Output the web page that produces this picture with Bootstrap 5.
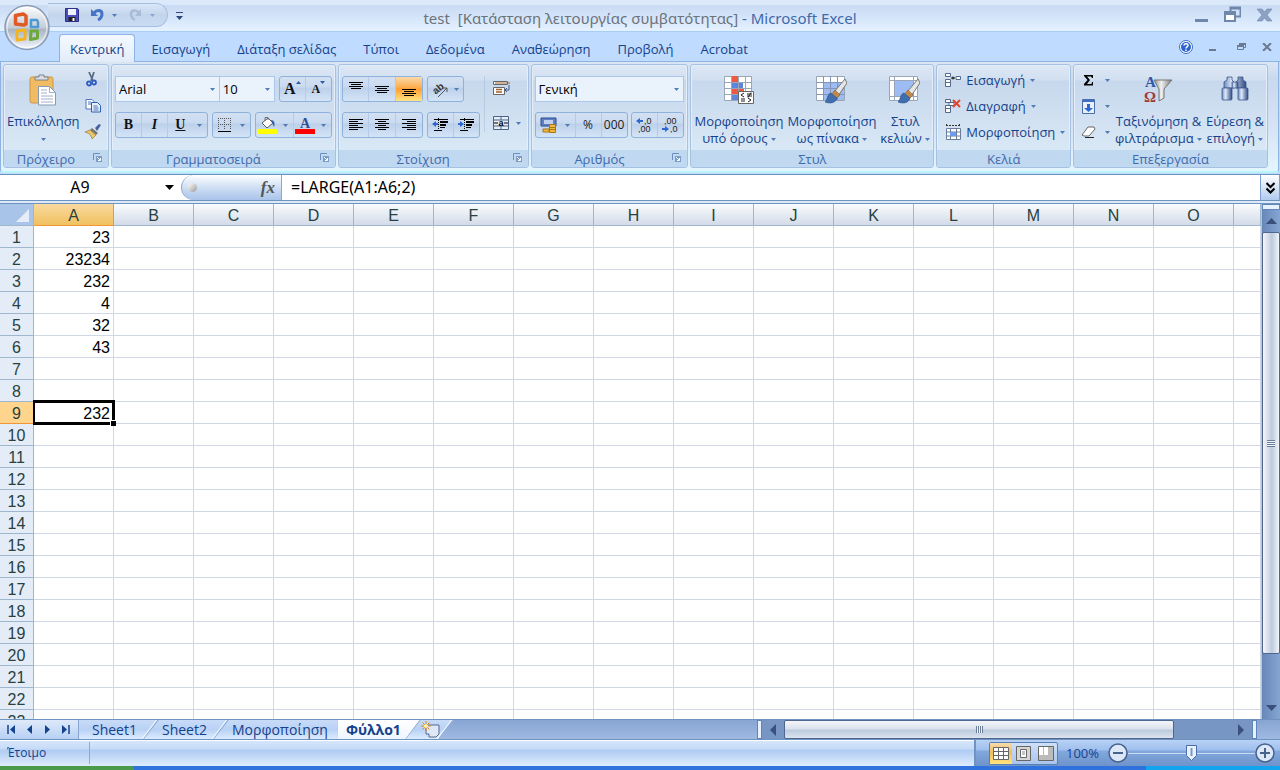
<!DOCTYPE html>
<html lang="el">
<head>
<meta charset="utf-8">
<meta name="viewport" content="width=device-width, initial-scale=1">
<title>test - Microsoft Excel</title>
<link rel="stylesheet" href="https://cdn.jsdelivr.net/npm/bootstrap@5.3.0/dist/css/bootstrap.min.css">
<style>
:root{--ink:#15428b;--ui:"Open Sans","Noto Sans",sans-serif;--calc:"Liberation Sans",Arial,sans-serif}
body{font:13px/16px var(--ui);color:var(--ink);background:#bfdbff;overflow:hidden}
button,select,input{font:inherit;color:inherit;border:0;background:none;padding:0;border-radius:0}
svg{display:block;flex:none}
a{color:inherit;text-decoration:none}
.titlebar{height:32px;background:linear-gradient(#dbe9fb 0 5px,#c9dbf3 5px,#d5e5fa 18px,#e4f1ff 30px);border-bottom:1px solid #a9cdf5}
.side{flex:1 1 0}
.wtitle{font-family:"Noto Sans",sans-serif;font-size:15px;line-height:20px;color:#6c737b}
.wtitle span{color:#3e6aaa}
.qat{height:24px;margin:3px 0 0 48px;padding:0 11px 0 17px;width:120px;border:1px solid #a5bfe2;border-left:0;border-radius:0 13px 13px 0;background:linear-gradient(#dae7f8,#c3d5ec 50%,#c9dcf4)}
.orb{position:absolute;left:4px;top:4px;z-index:3}
.tabs{height:30px;padding-left:59px;gap:5px;border-bottom:1px solid #8db2e3}
.tabs a{height:28px;line-height:29px;font-size:13px;padding:0 10px;border:1px solid transparent;border-bottom:0;margin-bottom:-1px}
.tabs a.on{background:linear-gradient(#f4f9ff,#e2ecf9);border-color:#8db2e3;border-radius:4px 4px 0 0}
.ribbon{height:111px;padding:2px 10px 3px 2px;gap:2px;background:linear-gradient(#dbe6f4 0,#c9d9ee 17px,#d4e2f4 60px,#e3f5ff 108px);border:1px solid #8db2e3;border-top:0;border-bottom:2px solid #b9f3fb;margin-right:1px;border-radius:0 0 4px 4px}
.grp{border:1px solid #a6c2e2;border-radius:3px;box-shadow:inset 0 0 0 1px #e3eefa;background:linear-gradient(#dee8f5 0,#d1dff0 15px,#c7d8ed 16px,#d9e8f5 85px);overflow:hidden}
.gbody{height:85px;padding:11px 3px 0}
.gbody.tight{padding-top:2px}
.glabel{height:20px;line-height:19px;font-size:13px;color:#3e6aaa;background:#c1d8f1;text-align:center;padding-right:20px;position:relative}
.glabel.plain{padding-right:0}
.glabel svg{position:absolute;right:6px;top:3px}
.w1{width:106px}.w2{width:225px}.w3{width:191px}.w4{width:158px}.w5{width:244px}.w6{width:135px}.w7{width:195px}
.big{display:flex;flex-direction:column;align-items:center;align-self:flex-start;line-height:17px;white-space:nowrap;margin-top:-2px}
.tight .big{margin-top:7px}
.big svg.pic{margin-bottom:7px}
.set{display:flex;height:26px;border:1px solid #8fb2dc;border-radius:3px;background:linear-gradient(#d3e0f2 0,#c9daf0 10px,#bcd0ea 11px,#d6e6f8 25px)}
.set button{display:flex;align-items:center;justify-content:center;flex:1 1 0;border-left:1px solid #b3cae8;gap:5px}
.set button:first-child{border-left:0}
.set .hot{background:linear-gradient(#fcd9a8,#fdac4c 45%,#fe9f33 50%,#ffe584)}
.set .sp{border-left:0;flex:0 0 14px}
.ser{font:bold 14px/16px "Liberation Serif",serif;color:#111}
.second{margin-top:10px}
.combo{position:relative;height:26px;border:1px solid #abc7ea;background:#eaf2fb;color:#000}
.combo select{appearance:none;display:block;width:100%;height:24px;padding-left:3px;line-height:22px}
.combo svg{position:absolute;right:4px;top:11px;pointer-events:none}
.numf{font-size:12px;color:#222}
.rowbtn{display:flex;align-items:center;gap:5px;height:26px}
.fbar{height:27px;border:1px solid #6f93bf;border-width:1px 0;background:#fff;margin-top:1px}
.fbar input{color:#000;height:24px;outline:0;font:16px/24px "Noto Sans",sans-serif}
.namebox{width:181px;position:relative}
.namebox input{width:160px;text-align:center}
.namebox svg{position:absolute;right:7px;top:10px}
.fx{width:101px;padding:0 6px;border:1px solid #8ba9d0;border-width:0 1px;border-radius:13px 0 0 13px;background:linear-gradient(#fff,#cfdff4 50%,#a9c3ea)}
.knob{width:9px;height:9px;border-radius:50%;background:linear-gradient(135deg,#fff,#9a9a9a)}
.fxl{font:italic bold 17px/20px "Liberation Serif",serif;color:#555}
.fbar .formula{flex:1;padding-left:9px}
.chev{width:20px;border:1px solid #7c9fce;border-width:0 1px;background:linear-gradient(#fff,#b1caef)}
.strip{height:3px;background:#dce9f8;border-bottom:1px solid #6f93bf}
.sheet{flex:1 1 0;min-height:0}
.cells{flex:1;min-width:0;overflow:hidden;background:#fff}
.calc{table-layout:fixed;width:100%;border-collapse:separate;border-spacing:0;font:16px/19px var(--calc);color:#000}
.calc th,.calc td{height:22px;padding:2px 0 0;border-right:1px solid #d0d7e5;border-bottom:1px solid #d0d7e5;font-weight:400;overflow:hidden}
.calc td{text-align:right;padding-right:3px}
.calc th{text-align:center;color:#27413e}
.calc thead th{background:linear-gradient(#f9fcfd,#d3dbe9);border-color:#9eb6ce}
.calc tbody th{background:#e4ecf7;border-color:#9eb6ce}
.calc thead th.on{background:linear-gradient(#f9d99f,#f1c15f);border-color:#f29536}
.calc tbody th.on{background:#ffd58d;border-color:#f29536}
.calc thead th.corner{background:#a9c4e9}
.calc .c0{width:34px}.calc .c1{width:80px}
.calc td.cur{position:relative;overflow:visible}
.cur i{position:absolute;inset:-2px -2px -2px -1px;border:solid #000;border-width:3px 3px 3px 2px}
.cur i::after{content:"";position:absolute;right:-4px;bottom:-4px;width:6px;height:6px;background:#000;border:solid #fff;border-width:1px 0 0 1px}
.vbar{width:19px;background:linear-gradient(90deg,#6787b9,#86a5d2);border-left:1px solid #a9c6ee}
.split{background:#e8f2ff;border:1px solid #5f86b8}
.vthumb{flex:0 0 82%;border:1px solid #4f678f;border-radius:2px;background:linear-gradient(90deg,#f4f6fa,#c9d3e2 45%,#bccadd 55%,#f0f5fb)}
.grip{width:8px;height:7px;background:repeating-linear-gradient(#6c7d98 0 1px,#eef3fa 1px 2px)}
.grip.h{width:7px;background:repeating-linear-gradient(90deg,#6c7d98 0 1px,#eef3fa 1px 2px)}
.tabbar{height:21px;background:linear-gradient(#87a5d3,#9fb9e1);border:1px solid #6f93bf;border-width:1px 0;font-size:14px}
.navs{width:79px;background:linear-gradient(#dfeafa,#b6d0f4);border-right:1px solid #8aa6cf;padding:0 7px}
.st{height:19px;line-height:19px;background:linear-gradient(#c8dcf8,#b8d1f5 50%,#dcebff);padding:0 22px 0 18px;margin-left:-15px;position:relative;clip-path:polygon(15px 0,100% 0,calc(100% - 15px) 100%,0 100%)}
.st svg.edge{position:absolute;right:0;top:0}
.st.first{clip-path:polygon(0 0,100% 0,calc(100% - 15px) 100%,0 100%);margin-left:0;padding-left:13px}
.st.last{padding-right:10px;clip-path:polygon(15px 0,100% 0,100% 100%,0 100%)}
.st.act{background:linear-gradient(#fff,#eef5ff);font-weight:700;margin-left:0;padding:0 20px 0 8px;clip-path:polygon(0 0,100% 0,calc(100% - 15px) 100%,0 100%)}
.st.new{padding:0 14px 0 15px}
.hbar{width:500px;background:#7796c3}
.hend{width:23px}
.hthumb{flex:0 0 390px;border:1px solid #4f678f;border-radius:2px;background:linear-gradient(#f4f6fa,#dbe2ec 45%,#bccadd 55%,#dce5f0)}
.status{height:26px;font-size:13px;background:linear-gradient(#fff 0 1px,#d6e5fb 1px,#c6dbf8 9px,#aecbf3 10px,#dceafd 25px)}
.ready{width:90px;padding-left:7px;height:22px;line-height:22px;border-right:1px solid #8ba9d6;font-size:12px}
.zoomarea{width:306px;border-left:2px solid #6f93bf;padding-left:13px;background:linear-gradient(#b9d2f5 0,#9fbfee 10px,#84a8de 11px,#7ba0d6 17px,#6e93cb)}
.views{flex:none;height:23px;width:69px;border:1px solid #587fb4;border-radius:2px;background:linear-gradient(#cfe0f8,#a9c4ec)}
.views button{flex:1;display:flex;align-items:center;justify-content:center}
.views .hot{background:linear-gradient(#f5dcae,#f0bd5a 45%,#ffe37e)}
.pct{flex:none;width:50px;text-align:right;padding-right:9px}
.zr{appearance:none;flex:none;width:127px;height:20px;background:linear-gradient(#c9dcf6,#c9dcf6) center/100% 1px no-repeat}
.zr::-webkit-slider-thumb{appearance:none;width:11px;height:16px;background:url("data:image/svg+xml,%3Csvg xmlns='http://www.w3.org/2000/svg' width='11' height='16'%3E%3Cpath d='M.5.5h10v10l-5 5-5-5z' fill='%23e9f1fb' stroke='%234a6da7'/%3E%3Cpath d='M5.500 3v8' stroke='%237b97c4' stroke-width='2'/%3E%3C/svg%3E")}
.task{height:4px;background:#2f71dd}
.task .start{width:134px;background:#4b9a4b;border-radius:0 3px 0 0}
.task .tray{width:134px;background:#12a5ee}
</style>
</head>
<body class="d-flex flex-column vh-100">
<svg width="0" height="0" class="position-absolute"><defs>
<symbol id="dn" viewBox="0 0 5 3"><path d="M0 0h5L2.500 3z" fill="#4f7cb8"/></symbol>
<symbol id="launch" viewBox="0 0 9 9"><path d="M.5 7V.5H7" fill="none" stroke="#6a8fc0"/><path d="M3 3h6v6H3z" fill="#7d9dc8"/><path d="M4 4l3 3M7.500 5v2.500H5" stroke="#fff" fill="none"/></symbol>
<symbol id="brush" viewBox="0 0 22 26"><path d="M20 1L9 14l4 4L22 5z" fill="#e6e6e6" stroke="#777"/><path d="M10 12l5 5-4 4-5-4z" fill="#c08a4b" stroke="#8a5a25" stroke-width=".6"/><path d="M6 15c-4 1-3 6-6 9 5 2 11 1 12-4z" fill="#3f6fae" stroke="#2b4f86" stroke-width=".6"/></symbol>
<symbol id="edge" viewBox="0 0 17 19"><path d="M16.500 0L2 19" stroke="#8aa6cf" stroke-width="1.500"/><path d="M14.500 0L0 19" stroke="#fff"/></symbol>
<linearGradient id="gsil" x2="0" y2="1"><stop stop-color="#fff"/><stop offset=".5" stop-color="#c6ccd6"/><stop offset=".55" stop-color="#a9b4c4"/><stop offset="1" stop-color="#f4f9ff"/></linearGradient>
<linearGradient id="gbin"><stop stop-color="#6f8cc4"/><stop offset=".35" stop-color="#dfe8f7"/><stop offset="1" stop-color="#2f4a84"/></linearGradient>
<linearGradient id="gfun"><stop stop-color="#8a8a8a"/><stop offset=".4" stop-color="#f2f2f2"/><stop offset="1" stop-color="#777"/></linearGradient>
</defs></svg>

<header class="titlebar d-flex align-items-start position-relative">
  <button class="orb" aria-label="Office"><svg width="46" height="47" viewBox="0 0 46 47"><circle cx="23" cy="23.500" r="22" fill="url(#gsil)" stroke="#8a9bb5" stroke-width="1.500"/><circle cx="23" cy="23.500" r="20" fill="none" stroke="#fff" stroke-opacity=".8"/><g fill="none" stroke-linejoin="round"><path d="M11.500 11.500l8-1.500 2.500 2v8l-2 1-8.500-1z" stroke="#e05a26" stroke-width="3.500"/><path d="M27 16h6l1 2v5l-7 0z" stroke="#4a9bd4" stroke-width="2.500"/><path d="M13 27l8-1v9l-8 1z" stroke="#f3b51f" stroke-width="3"/><path d="M27 27h6.500v7l-7 1.500z" stroke="#6aa93a" stroke-width="3"/></g></svg></button>
  <div class="side d-flex">
    <div class="qat d-flex align-items-center">
      <button aria-label="Αποθήκευση"><svg width="14" height="14" viewBox="0 0 14 14"><path d="M.5.5h12l1 1v12H.5z" fill="#4b4fb8" stroke="#2c2f86"/><path d="M3 1h8v6H3z" fill="#eef2fb"/><path d="M3.500 9h7v4h-7z" fill="#222"/><path d="M7.500 10h2v3h-2z" fill="#fff"/></svg></button>
      <button class="ms-2 ps-1" aria-label="Αναίρεση"><svg width="13" height="14" viewBox="0 0 13 14"><path d="M3 5c3-4 8-3 8 1 0 3-2 5-4 6" fill="none" stroke="#4673c4" stroke-width="3"/><path d="M0 1v7h7z" fill="#4673c4"/></svg></button>
      <svg class="ms-2" width="5" height="3"><use href="#dn"/></svg>
      <button class="ms-2 ps-1" aria-label="Ακύρωση αναίρεσης"><svg width="13" height="14" viewBox="0 0 13 14"><path d="M10 5C7 1 2 2 2 6c0 3 2 5 4 6" fill="none" stroke="#a9bbd6" stroke-width="2.500"/><path d="M12 1v7H6z" fill="#a9bbd6"/></svg></button>
      <svg class="ms-2" width="5" height="3" opacity=".5"><use href="#dn"/></svg>
    </div>
    <svg class="ms-2 mt-2 pt-1" width="7" height="12"><path d="M0 .5h7" stroke="#2d4a7a"/><path d="M0 4h7L3.500 8z" fill="#2d4a7a"/></svg>
  </div>
  <div class="wtitle pt-2 ps-2 text-nowrap">test&nbsp; [Κατάσταση λειτουργίας συμβατότητας] <span>- Microsoft Excel</span></div>
  <div class="side d-flex justify-content-end pe-2 pt-1">
    <button class="me-3" aria-label="Ελαχιστοποίηση"><svg width="13" height="20"><path d="M0 15h13v3H0z" fill="#6f87ab"/></svg></button>
    <button class="me-3" aria-label="Επαναφορά"><svg width="17" height="20"><path d="M6.500 9V3.500h10v9H12M6 4.500h11" fill="none" stroke="#6f87ab" stroke-width="2"/><path d="M1 8h10v9H1z" fill="#fff" stroke="#6f87ab" stroke-width="2"/><path d="M0 7h12v4H0z" fill="#6f87ab"/></svg></button>
    <button aria-label="Κλείσιμο"><svg width="15" height="20"><path d="M0 5h5l2.500 3L10 5h5l-5 6 5 6h-5l-2.500-3L5 17H0l5-6z" fill="#8da2c2" stroke="#6f87ab" stroke-width=".6"/></svg></button>
  </div>
</header>

<nav class="tabs d-flex align-items-end">
  <a class="on" href="#">Κεντρική</a><a href="#">Εισαγωγή</a><a href="#">Διάταξη σελίδας</a><a href="#">Τύποι</a><a href="#">Δεδομένα</a><a href="#">Αναθεώρηση</a><a href="#">Προβολή</a><a href="#">Acrobat</a>
  <div class="ms-auto d-flex align-items-center align-self-center pe-2">
    <button class="me-3" aria-label="Βοήθεια"><svg width="14" height="14" viewBox="0 0 14 14"><circle cx="7" cy="7" r="6.500" fill="#fff" stroke="#3f6ac0"/><circle cx="7" cy="7" r="5" fill="#2c62cf"/><path d="M5 5.500c0-2.500 4-2.500 4 0C9 7 7 6.800 7 8.500M7 9.500V11" stroke="#fff" stroke-width="1.500" fill="none"/></svg></button>
    <button class="me-3 pe-1" aria-label="Ελαχιστοποίηση παραθύρου"><svg width="8" height="10"><path d="M0 7h7v2H0z" fill="#6b7a90"/></svg></button>
    <button class="me-3" aria-label="Επαναφορά παραθύρου"><svg width="9" height="8"><path d="M2.500 2V.5h6v4H7M.5 3h6v3.500h-6z" fill="none" stroke="#6b7a90"/><path d="M0 2h7v2H0zM2 0h7v2H2z" fill="#6b7a90"/></svg></button>
    <button aria-label="Κλείσιμο παραθύρου"><svg width="10" height="8"><path d="M1 0l8 8M9 0L1 8" stroke="#6b7a90" stroke-width="2"/></svg></button>
  </div>
</nav>

<main class="ribbon d-flex">
  <section class="grp w1"><div class="gbody d-flex">
    <button class="big"><svg class="pic" width="28" height="32" viewBox="0 0 28 32"><rect x="1" y="3" width="23" height="26" rx="2" fill="#f0bb62" stroke="#c99748"/><path d="M6 6V3h4V1h5v2h4v3z" fill="#d9dde3" stroke="#6b7280" stroke-width=".8"/><path d="M9.500 12.500h11l6 6V31h-17z" fill="#fff" stroke="#8a97b0"/><path d="M20.500 12.500v6h6M12 16h6M12 19h6M12 22h12M12 25h12M12 28h12" fill="none" stroke="#9fb0cc"/></svg>Επικόλληση<svg class="mt-2" width="5" height="3"><use href="#dn"/></svg></button>
    <div class="d-flex flex-column ms-auto pe-1" style="gap:11px;margin-top:-4px">
      <button aria-label="Αποκοπή"><svg width="16" height="15" viewBox="0 0 16 15"><path d="M4 0l4 9M9 0L6 9" stroke="#5b6b86" stroke-width="1.800"/><circle cx="4" cy="11.500" r="2" fill="none" stroke="#2f5fc0" stroke-width="1.800"/><circle cx="9" cy="10.500" r="2" fill="none" stroke="#2f5fc0" stroke-width="1.800"/></svg></button>
      <button aria-label="Αντιγραφή"><svg width="16" height="15" viewBox="0 0 16 15"><path d="M1 1.500h6l2 2V11H1z" fill="#fff" stroke="#4d76b8"/><path d="M6.500 4.500h6l3 3v6.500h-9z" fill="#e4eefc" stroke="#2f5fb0"/><path d="M3 4h3M3 6h3M8.500 8h4M8.500 10h5M8.500 12h5" stroke="#4d76b8"/></svg></button>
      <button aria-label="Πινέλο μορφοποίησης"><svg width="16" height="15" viewBox="0 0 16 15"><path d="M10 4l4-4 2 1-4 6z" fill="#4a5fa0"/><path d="M7 4l6 5-2 2-6-5z" fill="#777"/><path d="M5 6l6 5-4 4C6 10 3 9 0 8z" fill="#ecc76a" stroke="#9a7b32" stroke-width=".7"/></svg></button>
    </div>
  </div><div class="glabel">Πρόχειρο<svg width="9" height="9"><use href="#launch"/></svg></div></section>

  <section class="grp w2"><div class="gbody">
    <div class="d-flex">
      <label class="combo" style="width:105px"><select aria-label="Γραμματοσειρά"><option>Arial</option></select><svg width="5" height="3"><use href="#dn"/></svg></label>
      <label class="combo border-start-0" style="width:55px"><select aria-label="Μέγεθος"><option>10</option></select><svg width="5" height="3"><use href="#dn"/></svg></label>
      <div class="set ms-1" style="width:53px"><button class="ser" style="gap:0;font-size:16px">A<svg class="align-self-start mt-1" width="5" height="3"><path d="M0 3h5L2.500 0z" fill="#2d5aa8"/></svg></button><button class="ser" style="gap:0;font-size:12px">A<svg class="align-self-start mt-1" width="5" height="3"><path d="M0 0h5L2.500 3z" fill="#2d5aa8"/></svg></button></div>
    </div>
    <div class="d-flex gap-1 second">
      <div class="set" style="width:93px"><button class="ser">B</button><button class="ser fst-italic">I</button><button class="ser text-decoration-underline">U</button><button class="sp" aria-label="Υπογράμμιση"><svg width="5" height="3"><use href="#dn"/></svg></button></div>
      <div class="set" style="width:39px"><button aria-label="Περιγράμματα"><svg width="13" height="14"><path d="M0 .5h13M0 6.500h13M.5 0v12M6.500 0v12M12.500 0v12" stroke="#555" stroke-dasharray="1 1"/><path d="M0 13.500h13" stroke="#000"/></svg></button><button class="sp" aria-label="Περισσότερα περιγράμματα"><svg width="5" height="3"><use href="#dn"/></svg></button></div>
      <div class="set" style="width:77px"><button aria-label="Χρώμα γεμίσματος"><svg width="20" height="18"><path d="M5 7l6-5 5 5-6 5z" fill="#fff" stroke="#555"/><path d="M8 5V1.500h3V4" stroke="#777" fill="none"/><path d="M14 4c4 0 4 4 3 7l-2-4z" fill="#3b64a8"/><path d="M0 13h20v5H0z" fill="#ff0"/></svg></button><button class="sp" aria-label="Περισσότερα χρώματα"><svg width="5" height="3"><use href="#dn"/></svg></button><button aria-label="Χρώμα γραμματοσειράς"><svg width="20" height="20"><text x="10" y="13" text-anchor="middle" font-family="Liberation Serif" font-weight="700" font-size="14" fill="#2f4f93">A</text><path d="M0 14h20v5H0z" fill="red"/></svg></button><button class="sp" aria-label="Άλλα χρώματα"><svg width="5" height="3"><use href="#dn"/></svg></button></div>
    </div>
  </div><div class="glabel">Γραμματοσειρά<svg width="9" height="9"><use href="#launch"/></svg></div></section>

  <section class="grp w3"><div class="gbody d-flex">
    <div>
      <div class="d-flex gap-1">
        <div class="set" style="width:81px"><button aria-label="Επάνω"><svg width="14" height="20"><path d="M0 3.500h14M2 5.500h10M0 7.500h14M2 9.500h10" stroke="#000"/></svg></button><button aria-label="Μέση"><svg width="14" height="20"><path d="M0 7.500h14M2 9.500h10M0 11.500h14M2 13.500h10" stroke="#000"/></svg></button><button class="hot" aria-label="Κάτω"><svg width="14" height="20"><path d="M0 10.500h14M2 12.500h10M0 14.500h14M2 16.500h10" stroke="#000"/></svg></button></div>
        <div class="set" style="width:37px"><button aria-label="Προσανατολισμός"><svg width="18" height="20"><text x="2" y="14" transform="rotate(-40 6 11)" font-family="Liberation Sans" font-weight="700" font-size="10" fill="#333">ab</text><path d="M7 18l9-9m0 4V9h-4" stroke="#555" fill="none"/></svg><svg width="5" height="3"><use href="#dn"/></svg></button></div>
      </div>
      <div class="d-flex gap-1 second">
        <div class="set" style="width:81px"><button aria-label="Αριστερά"><svg width="14" height="12"><path d="M0 .5h14M0 2.500h9M0 4.500h14M0 6.500h9M0 8.500h14M0 10.500h9" stroke="#000"/></svg></button><button aria-label="Κέντρο"><svg width="14" height="12"><path d="M0 .5h14M3 2.500h8M0 4.500h14M3 6.500h8M0 8.500h14M3 10.500h8" stroke="#000"/></svg></button><button aria-label="Δεξιά"><svg width="14" height="12"><path d="M0 .5h14M5 2.500h9M0 4.500h14M5 6.500h9M0 8.500h14M5 10.500h9" stroke="#000"/></svg></button></div>
        <div class="set" style="width:53px"><button aria-label="Μείωση εσοχής"><svg width="16" height="14"><path d="M2 1.500h14M2 12.500h8M8 9.500h5" stroke="#000"/><path d="M8 4h8M8 7h6" stroke="#000" stroke-width="2"/><path d="M6.500 0v14" stroke="#000" stroke-dasharray="1 1"/><path d="M0 6l4-3v2h2v2H4v2z" fill="#2f67d0"/></svg></button><button aria-label="Αύξηση εσοχής"><svg width="16" height="14"><path d="M2 1.500h14M2 12.500h8M8 9.500h5" stroke="#000"/><path d="M8 4h8M8 7h6" stroke="#000" stroke-width="2"/><path d="M6.500 0v14" stroke="#000" stroke-dasharray="1 1"/><path d="M6 6L2 3v2H0v2h2v2z" fill="#2f67d0"/></svg></button></div>
      </div>
    </div>
    <div class="vr ms-1" style="height:56px;color:#6d92c4"></div>
    <div class="d-flex flex-column ms-2 pt-1" style="gap:20px">
      <button aria-label="Αναδίπλωση"><svg width="17" height="16"><path d="M.5 1.500h14v3H.5z" fill="#fff" stroke="#666"/><path d="M2 3h15" stroke="#a0622d"/><path d="M.5 7.500h11v7H.5z" fill="#fff" stroke="#666"/><path d="M3 9.500h6M3 12h6" stroke="#a0622d" stroke-width="1.500"/><path d="M16 5v5h-3m1-2l-2 2 2 2" stroke="#36588f" fill="none"/></svg></button>
      <button class="d-flex align-items-center" style="gap:6px" aria-label="Συγχώνευση"><svg width="17" height="15"><path d="M.5.500h15v13H.5zM.5 4h15M.5 10h15M8 .5V4M8 10v4" fill="#e6eefa" stroke="#4d6285"/><text x="8" y="10" font-family="Liberation Sans" font-weight="700" font-size="9" text-anchor="middle">a</text><path d="M1 7h4M11 7h4" stroke="#000"/></svg><svg width="5" height="3"><use href="#dn"/></svg></button>
    </div>
  </div><div class="glabel">Στοίχιση<svg width="9" height="9"><use href="#launch"/></svg></div></section>

  <section class="grp w4"><div class="gbody">
    <label class="combo d-block"><select aria-label="Μορφή αριθμού"><option>Γενική</option></select><svg width="5" height="3"><use href="#dn"/></svg></label>
    <div class="d-flex justify-content-between second">
      <div class="set" style="width:93px"><button aria-label="Νόμισμα"><svg width="17" height="16"><path d="M1 1h15v8H1z" fill="#5f80c4" stroke="#2f4c91"/><path d="M4 3h9v4H4z" fill="#bfcff0"/><path d="M9.500 7.500h6v8h-6zM3 12h6v3H3z" fill="#f1b93b" stroke="#a97716"/><path d="M9 10.500h6M9 12.500h6" stroke="#a97716"/></svg></button><button class="sp" aria-label="Άλλα νομίσματα"><svg width="5" height="3"><use href="#dn"/></svg></button><button class="numf">%</button><button class="numf">000</button></div>
      <div class="set" style="width:53px"><button aria-label="Αύξηση δεκαδικών"><svg width="17" height="16" font-family="Liberation Sans" font-size="9" fill="#222"><text x="8" y="7">,0</text><text x="2" y="15">,00</text><path d="M0 4l4-3v2h3v2H4v2z" fill="#2f67d0"/></svg></button><button aria-label="Μείωση δεκαδικών"><svg width="17" height="16" font-family="Liberation Sans" font-size="9" fill="#222"><text x="2" y="7">,00</text><text x="8" y="15">,0</text><path d="M7 12l-4-3v2H0v2h3v2z" fill="#2f67d0"/></svg></button></div>
    </div>
  </div><div class="glabel">Αριθμός<svg width="9" height="9"><use href="#launch"/></svg></div></section>

  <section class="grp w5"><div class="gbody d-flex justify-content-between">
    <button class="big"><svg class="pic" width="30" height="32" viewBox="0 0 30 32"><path d="M.5 2.500h27v24H.5z" fill="#fff" stroke="#9aa6b8"/><path d="M7 2h7v6H7zM7 14h13v6H7z" fill="#ec5a43"/><path d="M7 8h12v6H7zM7 20h7v6H7z" fill="#5b86dc"/><path d="M.5 8.500h27M.5 14.500h27M.5 20.500h27M7.500 2v25M14.500 2v25M21.500 2v25" stroke="#9aa6b8" fill="none"/><path d="M14.500 17.500h15v12h-15z" fill="#fff" stroke="#666"/><path d="M20 19l-3 2 3 2M17 25h4M17 27h4M23 20h5M23 22h5M27 18.500l-3 5M24 24l3 2-3 2" stroke="#222" fill="none"/></svg><span>Μορφοποίηση</span><span>υπό όρους <svg class="d-inline-block align-middle" width="5" height="3"><use href="#dn"/></svg></span></button>
    <button class="big"><svg class="pic" width="32" height="32" viewBox="0 0 32 32"><path d="M.5 2.500h28v24H.5z" fill="#fff" stroke="#9aa6b8"/><path d="M7 8h21v18H7z" fill="#9dbcf3"/><path d="M.5 8.500h28M.5 14.500h28M.5 20.500h28M7.500 2v25M14.500 2v25M21.500 2v25" stroke="#8494b2" fill="none"/><use href="#brush" x="9" y="4" width="22" height="26"/></svg><span>Μορφοποίηση</span><span>ως πίνακα <svg class="d-inline-block align-middle" width="5" height="3"><use href="#dn"/></svg></span></button>
    <button class="big"><svg class="pic" width="32" height="32" viewBox="0 0 32 32"><path d="M.5 2.500h28v24H.5z" fill="#fff" stroke="#9aa6b8"/><path d="M5 7h19v15H5z" fill="#9dbcf3"/><path d="M.5 6.500h28M.5 22.500h28M5.500 2v25M24.500 2v25" stroke="#9aa6b8"/><use href="#brush" x="9" y="4" width="22" height="26"/></svg><span>Στυλ</span><span>κελιών <svg class="d-inline-block align-middle" width="5" height="3"><use href="#dn"/></svg></span></button>
  </div><div class="glabel plain">Στυλ</div></section>

  <section class="grp w6"><div class="gbody tight ps-2">
    <button class="rowbtn"><svg width="16" height="14"><path d="M.5.500h5v3h-5zM.5 6.500h5v3h-5zM.5 9.500h5v4h-5zM11 3.500h4.500v3H11z" fill="#fff" stroke="#53688c"/><path d="M6 5h4M8 3.500v3" stroke="#000"/></svg>Εισαγωγή <svg width="5" height="3"><use href="#dn"/></svg></button>
    <button class="rowbtn"><svg width="16" height="14"><path d="M.5.500h5v3h-5zM.5 6.500h5v3h-5zM.5 9.500h5v4h-5zM4 3.500h5v3H4z" fill="#fff" stroke="#53688c"/><path d="M8 1l7 7M15 1L8 8" stroke="#e8432a" stroke-width="2"/></svg>Διαγραφή <svg width="5" height="3"><use href="#dn"/></svg></button>
    <button class="rowbtn"><svg width="16" height="17"><path d="M1.500 4.500h14v11h-14zM1.500 8h14M1.500 12h14M5.500 4v12M11.500 4v12" fill="#fff" stroke="#6b7d9c"/><path d="M5 8h6v4H5z" fill="#6d9bf0"/><path d="M1 1.500h14M1.500 0v3M14.500 0v3" stroke="#333" stroke-dasharray="2 1"/></svg>Μορφοποίηση <svg width="5" height="3"><use href="#dn"/></svg></button>
  </div><div class="glabel plain">Κελιά</div></section>

  <section class="grp w7"><div class="gbody tight d-flex">
    <div class="d-flex flex-column ms-1 me-auto">
      <button class="rowbtn" aria-label="Άθροισμα"><svg width="15" height="14"><path d="M3 2h9v3h-1L10 3.500H6L9 7l-3 4h4.500L11 9h1v3.500H3V11l3.500-4L3 3z" fill="#000"/></svg><svg class="ms-1" width="5" height="3"><use href="#dn"/></svg></button>
      <button class="rowbtn" aria-label="Συμπλήρωση"><svg width="15" height="15"><path d="M1.500.500h12v14h-12z" fill="#e8f0fc" stroke="#4b6ea8"/><path d="M2 1h11v2H2z" fill="#3f6fc8"/><path d="M6 5h3v4h3l-4.500 4L3 9h3z" fill="#2f67d0"/></svg><svg class="ms-1" width="5" height="3"><use href="#dn"/></svg></button>
      <button class="rowbtn" aria-label="Απαλοιφή"><svg width="15" height="14"><path d="M1 10l6-8h6l1 2-6 7H3z" fill="#fff" stroke="#666"/><path d="M4 12.500h9" stroke="#222"/></svg><svg class="ms-1" width="5" height="3"><use href="#dn"/></svg></button>
    </div>
    <button class="big"><svg class="pic" width="30" height="32" viewBox="0 0 30 32"><path d="M11 6h18l-8 9v9l-5 3V15z" fill="url(#gfun)" stroke="#777"/><g font-family="Liberation Serif" font-weight="700"><text x="2" y="13" font-size="15" fill="#2f57a8">A</text><text x="1" y="28" font-size="15" fill="#a03a3a">Ω</text></g></svg><span>Ταξινόμηση &amp;</span><span>φιλτράρισμα <svg class="d-inline-block align-middle" width="5" height="3"><use href="#dn"/></svg></span></button>
    <button class="big ms-1"><svg class="pic" width="28" height="32" viewBox="0 0 28 32"><g fill="url(#gbin)" stroke="#3c568c" stroke-width=".8"><path d="M6 3h5v3l2 2v6H3V8l3-2zM17 3h5v3l3 2v6H15V8l2-2z"/><rect x="11" y="8" width="6" height="6"/><rect x="1" y="14" width="10" height="12" rx="1"/><rect x="17" y="14" width="10" height="12" rx="1"/></g></svg><span>Εύρεση &amp;</span><span>επιλογή <svg class="d-inline-block align-middle" width="5" height="3"><use href="#dn"/></svg></span></button>
  </div><div class="glabel plain">Επεξεργασία</div></section>
</main>

<div class="fbar d-flex">
  <div class="namebox"><input aria-label="Πλαίσιο ονόματος" value="A9"><svg width="9" height="5"><path d="M0 0h9L4.500 5z"/></svg></div>
  <div class="fx d-flex align-items-center justify-content-between"><span class="knob"></span><button class="fxl">fx</button></div>
  <input class="formula" aria-label="Γραμμή τύπων" value="=LARGE(A1:A6;2)">
  <button class="chev d-flex align-items-center justify-content-center" aria-label="Ανάπτυξη"><svg width="9" height="12"><path d="M.5 1l4 4 4-4M.5 6.500l4 4 4-4" fill="none" stroke="#000" stroke-width="2"/></svg></button>
</div>
<div class="strip"></div>

<div class="sheet d-flex">
  <div class="cells"><table class="calc"><thead><tr id="heads"></tr></thead><tbody id="rows"></tbody></table></div>
  <div class="vbar d-flex flex-column align-items-center">
    <div class="split w-100" style="height:6px"></div>
    <svg class="my-2" width="11" height="6"><path d="M0 6h11L5.500 0z" fill="#3b4f7c"/></svg>
    <div class="vthumb w-100 d-flex align-items-center justify-content-center"><span class="grip"></span></div>
    <svg class="mt-auto mb-2" width="11" height="6"><path d="M0 0h11L5.500 6z" fill="#3b4f7c"/></svg>
  </div>
</div>

<div class="tabbar d-flex">
  <div class="navs d-flex align-items-center justify-content-between">
    <button aria-label="Πρώτο"><svg width="9" height="9"><path d="M1 0v9" stroke="#15428b" stroke-width="1.500"/><path d="M8 0v9L3 4.500z" fill="#15428b"/></svg></button><button aria-label="Προηγούμενο"><svg width="6" height="9"><path d="M5 0v9L0 4.500z" fill="#15428b"/></svg></button><button aria-label="Επόμενο"><svg width="6" height="9"><path d="M0 0v9l5-4.500z" fill="#15428b"/></svg></button><button aria-label="Τελευταίο"><svg width="9" height="9"><path d="M7 0v9" stroke="#15428b" stroke-width="1.500"/><path d="M0 0v9l5-4.500z" fill="#15428b"/></svg></button>
  </div>
  <button class="st first">Sheet1<svg class="edge" width="17" height="19"><use href="#edge"/></svg></button><button class="st">Sheet2<svg class="edge" width="17" height="19"><use href="#edge"/></svg></button><button class="st last">Μορφοποίηση</button><button class="st act">Φύλλο1<svg class="edge" width="17" height="19"><use href="#edge"/></svg></button><button class="st new" aria-label="Νέο φύλλο"><svg width="19" height="17"><path d="M5 4h13v9l-3 3H8V13H5z" fill="#dfe8f6" stroke="#54698f"/><path d="M5 0v10M0 5h10M1.500 1.500l7 7M8.500 1.500l-7 7" stroke="#e08a1e"/><circle cx="5" cy="5" r="2" fill="#fff3b0"/></svg><svg class="edge" width="17" height="19"><use href="#edge"/></svg></button>
  <div class="hbar ms-auto d-flex align-items-center">
    <div class="split h-100" style="width:5px"></div>
    <svg class="mx-2" width="6" height="12"><path d="M6 0v12L0 6z" fill="#3b4f7c"/></svg>
    <div class="hthumb h-100 d-flex align-items-center justify-content-center"><span class="grip h"></span></div>
    <svg class="ms-auto me-2" width="6" height="12"><path d="M0 0v12l6-6z" fill="#3b4f7c"/></svg>
    <div class="split h-100" style="width:5px"></div>
  </div>
  <div class="hend"></div>
</div>

<footer class="status d-flex align-items-center">
  <div class="ready">Έτοιμο</div>
  <div class="zoomarea ms-auto h-100 d-flex align-items-center">
    <div class="views d-flex">
      <button class="hot" aria-label="Κανονική"><svg width="16" height="13"><path d="M.5.500h15v12H.5zM.5 4.500h15M.5 8.500h15M5.500 0v13M10.500 0v13" fill="#fff" stroke="#666"/></svg></button>
      <button aria-label="Διάταξη σελίδας"><svg width="15" height="15"><path d="M.5.500h14v14H.5z" fill="#d5d5d5" stroke="#666"/><path d="M4.500 3.500h6v8h-6z" fill="#fff" stroke="#666"/><path d="M6 6h3M6 8h3" stroke="#888"/></svg></button>
      <button aria-label="Προεπισκόπηση"><svg width="16" height="15"><path d="M.5.500h15v14H.5z" fill="#bbb" stroke="#666"/><path d="M1 1h4v8H1zM6 1h4v8H6z" fill="#fff"/></svg></button>
    </div>
    <label for="zoom" class="pct">100%</label>
    <button aria-label="Σμίκρυνση"><svg width="20" height="20"><circle cx="10" cy="10" r="9" fill="#dce8f8" stroke="#46628f" stroke-width="1.500"/><path d="M5 10h10" stroke="#46628f" stroke-width="2"/></svg></button>
    <input id="zoom" class="zr" type="range" min="0" max="100" value="50">
    <button aria-label="Μεγέθυνση"><svg width="20" height="20"><circle cx="10" cy="10" r="9" fill="#dce8f8" stroke="#46628f" stroke-width="1.500"/><path d="M5 10h10M10 5v10" stroke="#46628f" stroke-width="2"/></svg></button>
  </div>
</footer>
<div class="task d-flex justify-content-between"><div class="start"></div><div class="tray"></div></div>

<script>
const cols = "ABCDEFGHIJKLMNO".split("");
const values = {1: 23, 2: 23234, 3: 232, 4: 4, 5: 32, 6: 43, 9: 232};
document.getElementById("heads").innerHTML =
  '<th class="corner c0"><svg class="ms-auto me-1" width="13" height="13"><path d="M13 0v13H0z" fill="#e6edf7"/></svg></th>' +
  cols.map(c => `<th class="c1${c === "A" ? " on" : ""}">${c}</th>`).join("") + "<th></th>";
let html = "";
for (let r = 1; r <= 23; r++) {
  const active = r === 9;
  html += `<tr><th${active ? ' class="on"' : ""}>${r}</th><td${active ? ' class="cur"' : ""}>${values[r] ?? ""}${active ? "<i></i>" : ""}</td>` + "<td></td>".repeat(15) + "</tr>";
}
document.getElementById("rows").innerHTML = html;
</script>
<script src="https://cdn.jsdelivr.net/npm/bootstrap@5.3.0/dist/js/bootstrap.bundle.min.js"></script>
</body>
</html>
